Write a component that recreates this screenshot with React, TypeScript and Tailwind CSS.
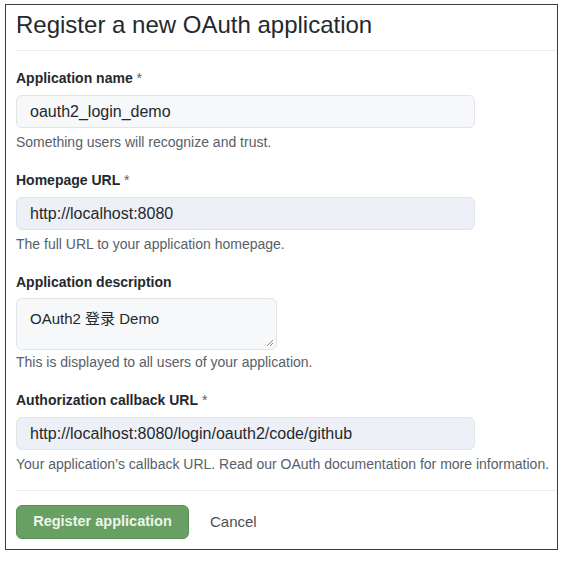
const font = { fontFamily: '"Liberation Sans", "Noto Sans CJK SC", sans-serif' }

interface FieldProps {
  label: string
  required?: boolean
  value: string
  hint: string
  filled?: boolean
}

function Field({ label, required, value, hint, filled }: FieldProps) {
  return (
    <div className="flex flex-col">
      <label className="text-[14px] leading-[20px] font-semibold text-[#24292e]">
        {label}
        {required && <span className="font-normal text-[#586069]"> *</span>}
      </label>
      <div
        className={`mt-[7px] w-[459px] h-[33px] rounded-[6px] border border-[#e1e4e8] px-[13px] flex items-center text-[16px] text-[#24292e] ${
          filled ? 'bg-[#edf0f6]' : 'bg-[#f7f8fa]'
        }`}
      >
        {value}
      </div>
      <p className="mt-[4px] text-[14px] leading-[20px] text-[#586069] whitespace-nowrap">{hint}</p>
    </div>
  )
}

export default function App() {
  return (
    <div className="w-[566px] h-[562px] bg-white pt-[4px] pl-[5px]" style={font}>
      <div className="w-[553px] h-[546px] border border-[#3c3c3c] pl-[10px] flex flex-col overflow-hidden">
        {/* header */}
        <div className="h-[46px] pt-[5px] border-b border-[#e8ecf0]">
          <h1 className="text-[24px] leading-[30px] text-[#24292e] font-normal">
            Register a new OAuth application
          </h1>
        </div>

        <div className="flex flex-col gap-[18px] pt-[17px]">
          <Field
            label="Application name"
            required
            value="oauth2_login_demo"
            hint="Something users will recognize and trust."
          />
          <Field
            label="Homepage URL"
            required
            value="http://localhost:8080"
            hint="The full URL to your application homepage."
            filled
          />

          <div className="flex flex-col">
            <label className="text-[14px] leading-[20px] font-semibold text-[#24292e]">
              Application description
            </label>
            <div className="relative mt-[6px] w-[261px] h-[52px] rounded-[6px] border border-[#e1e4e8] bg-[#f7f8fa] px-[13px] pt-[10px] text-[15px] leading-[20px] text-[#24292e]">
              OAuth2 登录 Demo
              <svg
                className="absolute right-[2px] bottom-[2px]"
                width="8"
                height="8"
                viewBox="0 0 8 8"
              >
                <path d="M7 1 L1 7 M7 4 L4 7" stroke="#888" strokeWidth="1" />
              </svg>
            </div>
            <p className="mt-[2px] text-[14px] leading-[20px] text-[#586069]">
              This is displayed to all users of your application.
            </p>
          </div>

          <Field
            label="Authorization callback URL"
            required
            value="http://localhost:8080/login/oauth2/code/github"
            hint="Your application’s callback URL. Read our OAuth documentation for more information."
            filled
          />
        </div>

        <div className="mt-[16px] border-t border-[#e8ecf0] pt-[14px] flex items-center gap-[21px]">
          <button className="h-[34px] w-[173px] rounded-[6px] border border-[#5e915a] bg-[#689f63] text-[14.5px] font-semibold text-[#eef5ec]">
            Register application
          </button>
          <span className="text-[15px] text-[#4a5058]">Cancel</span>
        </div>
      </div>
    </div>
  )
}
